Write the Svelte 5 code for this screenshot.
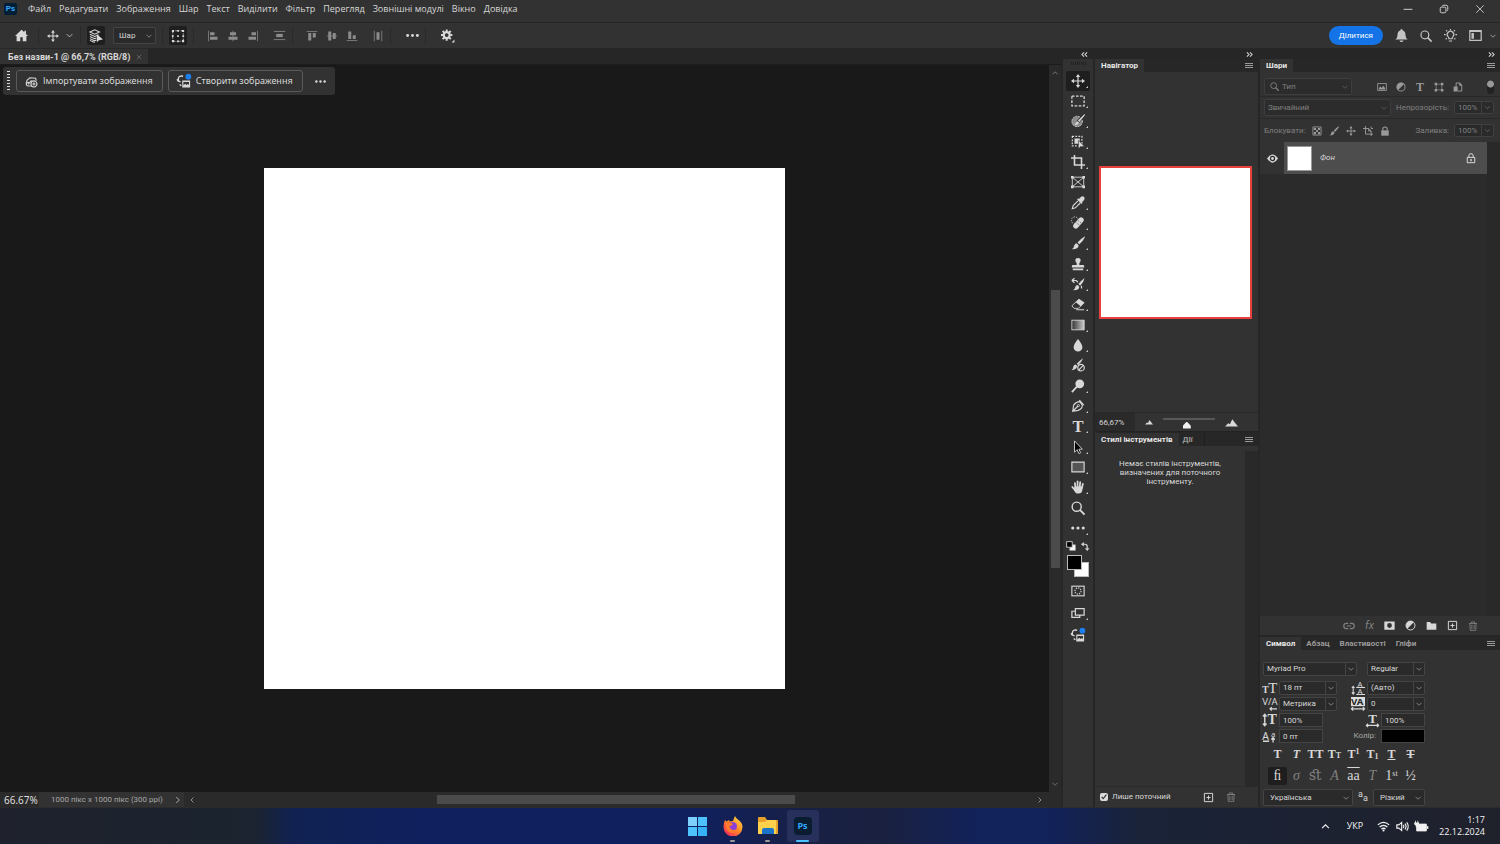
<script lang="ts">
  const menus = ['Файл', 'Редагувати', 'Зображення', 'Шар', 'Текст', 'Виділити', 'Фільтр', 'Перегляд', 'Зовнішні модулі', 'Вікно', 'Довідка']

  const serif = 'font-family="Liberation Serif, serif" fill="currentColor" stroke="none"'
  const sans = 'font-family="Noto Sans, sans-serif" fill="currentColor" stroke="none"'

  // all icons are drawn on a 16x16 grid
  const icons: Record<string, string> = {
    home: '<path fill="currentColor" stroke="none" d="M8 1 0 8.500h2V15h4.500v-5h3v5H14V8.500h2L13.500 6V2h-2v2z"/>',
    move: '<path d="M8 2v12M2 8h12" stroke-width="1.400"/><path fill="currentColor" stroke="none" d="M8 0l2.500 3.500h-5zM8 16l2.500-3.500h-5zM0 8l3.500-2.500v5zM16 8l-3.500-2.500v5z"/>',
    down: '<path stroke-width="1.400" d="M3 5.500 8 10.500 13 5.500"/>',
    up: '<path stroke-width="1.600" d="M3 10.500 8 5.500l5 5"/>',
    left: '<path stroke-width="1.600" d="M11 3 6 8l5 5"/>',
    right: '<path stroke-width="1.600" d="M5 3l5 5-5 5"/>',
    dleft: '<path stroke-width="2.400" d="M7 3 2 8l5 5M14 3 9 8l5 5"/>',
    dright: '<path stroke-width="2.400" d="M2 3l5 5-5 5M9 3l5 5-5 5"/>',
    close: '<path stroke-width="1.300" d="M2 2l12 12M14 2 2 14"/>',
    minimize: '<path stroke-width="1.500" d="M1 8.500h14"/>',
    restore: '<rect x="2" y="5" width="9" height="9" rx="2" stroke-width="1.500"/><path stroke-width="1.500" d="M5 3.500Q5.500 2 7 2h4.500Q14 2 14 4.500V9q0 1.500-1.500 2"/>',
    autoSelect: '<path stroke-width="1.200" d="M1 3.500 6.500 1 12 3.500 6.500 6zM1 6l5.500 2.500L11 6.500M1 8.500 6.500 11l2-1M1 11l5.500 2.500 2-1M1 13l5.500 2.500"/><path fill="currentColor" stroke="none" d="M9 6v9l2.300-2.200L16 12z"/>',
    transform: '<path stroke-dasharray="1.500 1.500" d="M2 2h12v12H2z"/><path fill="currentColor" stroke="none" d="M1 1h2.500v2.500H1zM7 1h2v2H7zM12.500 1H15v2.500h-2.500zM1 7h2v2H1zM13 7h2v2h-2zM1 12.500h2.500V15H1zM7 13h2v2H7zM12.500 12.500H15V15h-2.500zM7 7h2v2H7z"/>',
    alignLeft: '<path d="M2 1v14"/><path fill="currentColor" stroke="none" d="M4 3h6v4H4zM4 9h10v4H4z"/>',
    alignCenter: '<path d="M8 1v14"/><path fill="currentColor" stroke="none" d="M4 3h8v4H4zM2 9h12v4H2z"/>',
    alignRight: '<path d="M14 1v14"/><path fill="currentColor" stroke="none" d="M6 3h6v4H6zM2 9h10v4H2z"/>',
    distribute: '<path d="M1 3h14M1 13h14"/><path fill="currentColor" stroke="none" d="M4 6h8v4H4z"/>',
    alignTop: '<path d="M1 2h14"/><path fill="currentColor" stroke="none" d="M3 4h4v10H3zM9 4h4v6H9z"/>',
    alignMiddle: '<path d="M1 8h14"/><path fill="currentColor" stroke="none" d="M3 2h4v12H3zM9 4h4v8H9z"/>',
    alignBottom: '<path d="M1 14h14"/><path fill="currentColor" stroke="none" d="M3 2h4v10H3zM9 7h4v5H9z"/>',
    distributeH: '<path d="M3 1v14M13 1v14"/><path fill="currentColor" stroke="none" d="M6 3h4v10H6z"/>',
    dots: '<g fill="currentColor" stroke="none"><circle cx="2" cy="8" r="1.800"/><circle cx="8" cy="8" r="1.800"/><circle cx="14" cy="8" r="1.800"/></g>',
    gear: '<circle cx="7" cy="7.500" r="3.700" stroke-width="2.800"/><path stroke-width="2.400" d="M7 .500v2.500M7 12v2.500M0 7.500h2.500M11.500 7.500H14M2 2.500l2 2M10 10.500l2 2M12 2.500l-2 2M4 10.500l-2 2"/><path fill="currentColor" stroke="none" d="M16.500 13v3.500H13z"/>',
    bell: '<path fill="currentColor" stroke="none" d="M8 0q1.200 0 1.300 1.400Q13 2.500 13 8q0 3 2.500 5H.500Q3 11 3 8q0-5.500 3.700-6.600Q6.800 0 8 0zM5.500 14h5q-.5 2-2.500 2t-2.500-2z"/>',
    search: '<circle cx="6.500" cy="6.500" r="5.200" stroke-width="1.600"/><path stroke-width="2.200" d="M10.200 10.200 15.500 15.500"/>',
    bulb: '<path stroke-width="1.400" d="M6 12q0-1.500-1-2.500a4 4 0 1 1 6 0Q10 10.500 10 12zM6 14.800h4M8 0v1.500M0 7h2M14 7h2M2.500 1.500 4 3M13.500 1.500 12 3M2 12.500l1.500-1M14 12.500l-1.500-1"/>',
    workspace: '<rect x="1" y="2" width="14" height="12" stroke-width="1.500"/><path fill="currentColor" stroke="none" d="M3 5h3v7H3zM1 2h14v1.800H1z"/>',
    importImg: '<path stroke-width="1.300" d="M1.500 10.500 2.500 6.500 6 3.500l7 .5 1 3M1.500 10.500q0 3 2.500 3h3M4 11.500l4-5M2 10l3-1"/><circle cx="11" cy="11" r="3.700" stroke-width="1.400"/><path stroke-width="1.300" d="M11 9v4M9 11h4"/>',
    generate: '<path stroke-width="1.600" d="M7 2.500Q1.500 1.500 1.500 6v2l2.500 1M1.500 8.500 0 6M3 12l2 1.500"/><path fill="currentColor" stroke="none" fill-rule="evenodd" d="M6 7.500h9V15.500H6zM7.300 9v4l2-2 1.700 1.500 1.500-1 1.200 1V9z"/><circle cx="13" cy="3" r="3.300" fill="#1b7ff0" stroke="none"/>',
    marquee: '<path stroke-width="1.500" stroke-dasharray="3 1.700" d="M1 2.500h14v11H1z"/>',
    selectBrush: '<circle cx="7" cy="8.500" r="6" stroke-dasharray="2 1.200" fill="#8a8a8a"/><path stroke="#323232" stroke-width="3.500" d="M15 1 8 9"/><path fill="currentColor" stroke="none" d="M15.500 0 16 1 9.500 9 8 7.500zM8 8.500 9 10q-1 3-5 2.500Q5.500 9 8 8.500z"/>',
    objectSelect: '<path stroke-dasharray="2 1.500" stroke-width="1.400" d="M1.500 1.500h11v11h-11z"/><path fill="currentColor" stroke="none" d="M4 4h6v6H4z"/><path fill="currentColor" stroke="#323232" stroke-width=".7" d="M8.500 6v10l2.500-2.800 4.500-.2z"/>',
    crop: '<path stroke-width="1.800" d="M4 0v11.500h12M0 3.500h12V16"/>',
    frame: '<path d="M1.500 2.500h13v11h-13zM2 3l12 10M14 3 2 13"/><path fill="currentColor" stroke="none" d="M0 1h3v3H0zM13 1h3v3h-3zM0 12h3v3H0zM13 12h3v3h-3z"/>',
    dropper: '<path fill="currentColor" stroke="none" d="M11 1.500q2-2 4-.5 1.500 2-.5 4L12.500 7l.8.8-1.300 1.200-5-5L8.200 2.700l.8.8z"/><path stroke-width="1.300" d="M8 5.500 2.500 11 1.500 14.500 5 13.500 10.500 8"/>',
    heal: '<circle cx="4.500" cy="5" r="4" stroke-dasharray="1.500 1.300"/><path stroke-width="6" stroke-linecap="round" d="M5.500 11.500l6-7"/><path stroke="#323232" stroke-width="1" stroke-dasharray="1 1.500" d="M6.500 8l4 3M8.500 5.500l3.500 3"/>',
    brush: '<path fill="currentColor" stroke="none" d="M15.500.5 16 1q-2 4.500-6.500 8.500L7.500 7.500Q11 3 15.500.500zM6.500 8.300l2.200 2.200Q9 15 1 15q2.500-1.500 2.500-4 1-2.500 3-2.700z"/>',
    stamp: '<path fill="currentColor" stroke="none" d="M8 1q3 0 3 2.700Q11 5.500 9.500 7v2H14q1 0 1 1.500V12H1v-1.500Q1 9 2 9h4.500V7Q5 5.500 5 3.700 5 1 8 1zM2 13h12v2H2z"/>',
    history: '<path fill="currentColor" stroke="none" d="M15.500 1q-1 5-5 9L8.500 8Q12 3.500 15.500 1zM7.500 9l2 2q0 4-7 4Q5 13 5 11q.5-2 2.500-2z"/><path stroke-width="1.400" d="M1 4h5l2 2M1 4l3-2.500M1 4l3 2.500M12 10v3"/>',
    eraser: '<path d="M1 10 9 2.500l6 4L8.500 13h-5z"/><path fill="currentColor" stroke="none" d="M5.500 6 9 2.500l6 4-4 4zM6 14h9v1.200H6z"/>',
    gradient: '<defs><linearGradient id="tool-gradient"><stop stop-color="#333"/><stop offset="1" stop-color="#ccc"/></linearGradient></defs><rect x="1" y="2.500" width="14" height="11" fill="url(#tool-gradient)"/>',
    drop: '<path fill="currentColor" stroke="none" d="M8 1q5 6 5 9.500a5 5 0 0 1-10 0Q3 7 8 1z"/>',
    mixer: '<path fill="currentColor" stroke="none" d="M14 0q-2 5-6 8L6.500 6.500Q10 3 14 0zM5.500 7.500 7 9q0 4-6.500 5Q3 12 2.500 10q1-2.500 3-2.500z"/><circle cx="11.500" cy="11" r="3.700" stroke-width="1.400"/><path stroke-width="1.400" d="M9 13.500l5-5"/>',
    dodge: '<circle cx="10" cy="5.500" r="5" fill="currentColor" stroke="none"/><path stroke-width="2" d="M7 8.500 1 15"/>',
    pen: '<path stroke-width="1.300" d="M2 14l1-7q3-4 7-4l3 4q0 4-5 6zM2 14l6-6"/><path stroke-width="1.600" d="M9.500 1.500 14.500 7"/><circle cx="8.500" cy="7.500" r="1.200"/>',
    type: `<text x="8" y="14.500" font-size="19" text-anchor="middle" font-weight="bold" ${serif}>T</text>`,
    pathSelect: '<path fill="#050505" d="M4 1v13l3-3 2 4.500 2-1L9 10.500h4z"/>',
    rect: '<path fill="#555" stroke-width="1.300" d="M1 2.500h14v11H1z"/>',
    hand: '<g stroke-width="2" stroke-linecap="round"><path d="M5 9 4.500 3.500M7.500 8V1.500M10 8l.5-5.500M12.500 9l1-4.500M4.500 11.500 1.500 8"/></g><path fill="currentColor" stroke="none" d="M4 7.500h9.500l-.5 4q-.5 4-4.500 4t-5-4.500z"/>',
    quickMask: '<rect x="1" y="2.500" width="14" height="11" stroke-width="1.300"/><circle cx="8" cy="8" r="3.500" stroke-dasharray="1.500 1.200" stroke-width="1.300"/>',
    screenMode: '<path d="M5 6H1v7h9v-2M5 3h10v7.500H5z" stroke-width="1.400"/>',
    swap: '<path stroke-width="2.200" d="M4 4h3q4 0 4 4v3"/><path fill="currentColor" stroke="none" d="M0 4l5-4v8zM11 16l-4-5h8z"/>',
    defaults: '<path fill="#fff" stroke="#aaa" d="M6 6h9v9H6z"/><path fill="#000" stroke="#ccc" stroke-width="1.500" d="M1 1h9v9H1z"/>',
    image: '<path d="M1 2.500h14v11H1z" stroke-width="1.400"/><path fill="currentColor" stroke="none" d="M3 12V9.500L5.500 7l2 2.500L10 6l3 4v2z"/>',
    halfCircle: '<circle cx="8" cy="8" r="6.500" stroke-width="1.400"/><path fill="currentColor" stroke="none" d="M12.600 3.400A6.500 6.500 0 1 0 3.400 12.600z"/>',
    shape: '<path d="M3.500 3.500h9v9h-9z"/><path fill="currentColor" stroke="none" d="M1 1h4v4H1zM11 1h4v4h-4zM1 11h4v4H1zM11 11h4v4h-4z"/>',
    smart: '<path stroke-width="1.500" d="M5 7V1.500h6L14 5v9.500H8"/><path fill="currentColor" stroke="none" d="M1 7h6.500v8H1zM10 1v5h5z"/>',
    checker: '<path stroke-width="1.400" d="M1.500 1.500h13v13h-13z"/><path fill="currentColor" stroke="none" d="M3 3h3.500v3.500H3zM9.500 3H13v3.500H9.500zM6.500 6.500h3v3h-3zM3 9.500h3.500V13H3zM9.500 9.500H13V13H9.500z"/>',
    artboard: '<path stroke-width="1.500" d="M4 0v13h12M0 4h9l4 4v8M9 4v4h4M13 1v3h3"/>',
    lock: '<path stroke-width="1.700" d="M4.500 8V5a3.500 3.500 0 0 1 7 0v3"/><path fill="currentColor" stroke="none" d="M2 7h12v8.500H2z"/>',
    lockOutline: '<path stroke-width="1.600" d="M4.500 7V4.500a3.500 3.500 0 0 1 7 0V7M2 7h12v8.500H2z"/><path stroke-width="2.200" d="M8 9.500v3.500"/>',
    eye: '<path fill="currentColor" stroke="none" d="M0 8q8-12 16 0-8 12-16 0z"/><circle cx="8" cy="8" r="3" fill="currentColor" stroke="#2b2b2b" stroke-width="1.800"/>',
    link: '<path stroke-width="1.500" d="M7 11.500H4.500a3.500 3.500 0 0 1 0-7H7M9 4.500h2.500a3.500 3.500 0 0 1 0 7H9M5 8h6"/>',
    mask: '<path fill="currentColor" stroke="none" fill-rule="evenodd" d="M.5 2h15v12H.500zM8 4.500a3.500 3.500 0 1 0 0 7 3.500 3.500 0 0 0 0-7z"/>',
    folder: '<path fill="currentColor" stroke="none" d="M1 3h5l1.500 2H15v9H1z"/>',
    plus: '<path stroke-width="1.400" d="M2 2h12v12H2zM8 5v6M5 8h6"/>',
    trash: '<path stroke-width="1.400" d="M1.500 4h13M5.500 4V1.500h5V4M3 4l.7 11h8.600L13 4M6.200 6v7M9.800 6v7"/>',
    hill: '<path fill="currentColor" stroke="none" d="M0 13l4-4 2 1 3-6 3 4 4 5z"/>',
    wifi: '<path stroke-width="1.600" d="M1 6q7-6 14 0M3.200 8.700q4.800-4.200 9.600 0M5.500 11.200q2.500-2 5 0"/><circle cx="8" cy="13" r="1.300" fill="currentColor" stroke="none"/>',
    sound: '<path stroke-width="1.400" d="M1 6h2.500L7 3v10l-3.500-3H1zM9 6q1.500 2 0 4M11 4.500q2.800 3.500 0 7M13.200 3q3.800 5 0 10"/>',
    battery: '<path fill="currentColor" d="M4 5h10v8.500H2V8z"/><path stroke-width="1.800" d="M15.500 7.500v3.500"/><path fill="currentColor" stroke="none" d="M0 1h1v2h2V1h1v2h1v2q-1 2-2 2v2H1V7Q-1 6-1 5V3h1z"/>',
    sizeT: `<text x="-1" y="14" font-size="11" font-weight="bold" ${serif}>T</text><text x="6" y="14" font-size="17" ${serif}>T</text>`,
    leading: `<path stroke-width="1.200" d="M2.500 6v9M1 8l1.500-2L4 8M1 13l1.500 2L4 13M6 7.500h10M6 15.500h10"/><text x="7.500" y="6.500" font-size="9" ${sans}>A</text><text x="7.500" y="14.500" font-size="9" ${sans}>A</text>`,
    kerning: `<text x="-1" y="9.500" font-size="11" ${sans}>V/A</text><path stroke-width="1.400" d="M8 13.500h8M10 11.500l-2 2 2 2"/>`,
    tracking: `<path fill="#ddd" stroke="none" d="M0 0h16v10.500H0z"/><text x="0" y="9.500" font-size="11" font-family="Noto Sans, sans-serif" font-weight="bold" fill="#262626" stroke="none">VA</text><path stroke-width="1.400" d="M0 13.500h16M2.500 11.500l-2 2 2 2M13.500 11.500l2 2-2 2"/>`,
    vscale: `<path stroke-width="1.600" d="M2 2v12M0 4l2-2.500L4 4M0 12l2 2.500L4 12"/><text x="5" y="13" font-size="16" font-weight="bold" ${serif}>T</text>`,
    hscale: `<text x="8" y="11" font-size="16" text-anchor="middle" font-weight="bold" ${serif}>T</text><path stroke-width="1.500" d="M0 14h16M2.500 12l-2 2 2 2M13.500 12l2 2-2 2"/>`,
    baseline: `<text x="-1" y="12" font-size="12" ${sans}>A</text><text x="9" y="9" font-size="9" ${sans}>a</text><path stroke-width="1.500" d="M0 14h7M11.500 10v5.500M9.500 12l2-2 2 2"/>`
  }

  const tools = [
    ['move', 'Переміщення'], ['marquee', 'Прямокутна область'], ['selectBrush', 'Пензель виділення'],
    ['objectSelect', 'Виділення обʼєктів'], ['crop', 'Кадрування'], ['frame', 'Рамка'], ['dropper', 'Піпетка'],
    ['heal', 'Відновлення'], ['brush', 'Пензель'], ['stamp', 'Штамп'], ['history', 'Архівний пензель'],
    ['eraser', 'Гумка'], ['gradient', 'Градієнт'], ['drop', 'Розмиття'], ['mixer', 'Коригувальний пензель'],
    ['dodge', 'Освітлення'], ['pen', 'Перо'], ['type', 'Текст'], ['pathSelect', 'Виділення контуру'],
    ['rect', 'Прямокутник'], ['hand', 'Рука'], ['search', 'Масштаб'], ['dots', 'Інше']
  ]
  const noFlyout = ['frame', 'mixer', 'search']

  let activeTool = 'move'
  let onlyCurrent = true
</script>

{#snippet icon(name: string, size = 12)}
  <svg class="icon" width={size} height={size} viewBox="0 0 16 16" aria-hidden="true">{@html icons[name]}</svg>
{/snippet}

{#snippet combo(label: string, value: string, kind = '')}
  <span class="combo {kind}">
    <select aria-label={label}><option>{value}</option></select>
    <span class="arrow">{@render icon('down', 8)}</span>
  </span>
{/snippet}

{#snippet burger()}
  <button class="burger" aria-label="Меню панелі"><i></i><i></i><i></i></button>
{/snippet}

<div class="screen">
  <header class="menubar">
    <span class="ps-logo">Ps</span>
    <nav>
      {#each menus as item}
        <button>{item}</button>
      {/each}
    </nav>
    <div class="window-buttons">
      <button aria-label="Згорнути">{@render icon('minimize', 10)}</button>
      <button aria-label="Відновити">{@render icon('restore', 10)}</button>
      <button aria-label="Закрити">{@render icon('close', 10)}</button>
    </div>
  </header>

  <div class="options">
    <button class="home" aria-label="Головна">{@render icon('home', 13)}</button>
    <span class="sep"></span>
    <button class="opt-move" aria-label="Переміщення">{@render icon('move', 12)}{@render icon('down', 9)}</button>
    <span class="sep"></span>
    <button class="pressed" aria-label="Автовибір">{@render icon('autoSelect', 14)}</button>
    {@render combo('Автовибір', 'Шар', 'layer-kind')}
    <span class="sep"></span>
    <button class="pressed" aria-label="Елементи трансформування">{@render icon('transform', 14)}</button>
    <span class="sep"></span>
    <div class="aligns">
      <button aria-label="За лівим краєм">{@render icon('alignLeft', 12)}</button>
      <button aria-label="По центру">{@render icon('alignCenter', 12)}</button>
      <button aria-label="За правим краєм">{@render icon('alignRight', 12)}</button>
    </div>
    <div class="aligns last"><button aria-label="Розподілити">{@render icon('distribute', 13)}</button></div>
    <span class="sep"></span>
    <div class="aligns">
      <button aria-label="За верхнім краєм">{@render icon('alignTop', 12)}</button>
      <button aria-label="Посередині">{@render icon('alignMiddle', 12)}</button>
      <button aria-label="За нижнім краєм">{@render icon('alignBottom', 12)}</button>
    </div>
    <div class="aligns last"><button aria-label="Розподілити горизонтально">{@render icon('distributeH', 12)}</button></div>
    <span class="sep"></span>
    <button class="spaced" aria-label="Ще">{@render icon('dots', 13)}</button>
    <span class="sep"></span>
    <button class="spaced" aria-label="Налаштування">{@render icon('gear', 13)}</button>

    <div class="options-right">
      <button class="share">Ділитися</button>
      <button aria-label="Сповіщення">{@render icon('bell', 13)}</button>
      <button aria-label="Пошук">{@render icon('search', 12)}</button>
      <button aria-label="Довідка">{@render icon('bulb', 13)}</button>
      <button class="ws" aria-label="Робоче середовище">{@render icon('workspace', 13)}{@render icon('down', 8)}</button>
    </div>
  </div>

  <div class="workspace">
    <main class="document">
      <div class="doc-tabs">
        <div class="doc-tab">
          <span>Без назви-1 @ 66,7% (RGB/8)</span>
          <button aria-label="Закрити документ">{@render icon('close', 6)}</button>
        </div>
      </div>
      <div class="doc-body">
        <div class="viewport">
          <div class="artboard"></div>
          <div class="context-bar">
            <span class="grip"></span>
            <button class="action">{@render icon('importImg', 13)}Імпортувати зображення</button>
            <button class="action">{@render icon('generate', 14)}Створити зображення</button>
            <button class="more" aria-label="Ще">{@render icon('dots', 11)}</button>
          </div>
        </div>
        <div class="vscroll">
          {@render icon('up', 8)}
          <div class="track"><div class="thumb"></div></div>
          {@render icon('down', 8)}
        </div>
      </div>
      <div class="status">
        <span class="zoom">66.67%</span>
        <span class="info">1000 пікс x 1000 пікс (300 ppi)</span>
        <button aria-label="Відомості">{@render icon('right', 10)}</button>
        {@render icon('left', 8)}
        <div class="hscroll"><div class="thumb"></div></div>
        {@render icon('right', 8)}
        <span class="corner"></span>
      </div>
    </main>

    <aside class="toolbar">
      <div class="collapse">{@render icon('dleft', 7)}</div>
      <div class="tools">
        <span class="tool-grip"></span>
        <div class="tool-list">
          {#each tools as [name, label]}
            <button
              class="tool"
              class:active={activeTool === name}
              class:flyout={!noFlyout.includes(name)}
              aria-label={label}
              on:click={() => (activeTool = name)}
            >
              {@render icon(name, 14)}
            </button>
          {/each}
        </div>
        <div class="color-reset">
          <button aria-label="Стандартні кольори">{@render icon('defaults', 10)}</button>
          <button aria-label="Поміняти кольори">{@render icon('swap', 9)}</button>
        </div>
        <div class="swatches">
          <button class="bg" aria-label="Колір тла"></button>
          <button class="fg" aria-label="Основний колір"></button>
        </div>
        <div class="modes">
          <button class="tool" aria-label="Швидка маска">{@render icon('quickMask', 14)}</button>
          <button class="tool flyout" aria-label="Режим екрана">{@render icon('screenMode', 14)}</button>
          <button class="tool" aria-label="Створити зображення">{@render icon('generate', 14)}</button>
        </div>
      </div>
    </aside>

    <aside class="column narrow">
      <div class="collapse">{@render icon('dright', 7)}</div>
      <section class="panel navigator">
        <div class="tabs">
          <button class="tab current">Навігатор</button>
          {@render burger()}
        </div>
        <div class="nav-view"><div class="nav-preview"></div></div>
        <div class="nav-zoom">
          <input class="zoom-value" type="text" value="66,67%" aria-label="Масштаб" />
          {@render icon('hill', 8)}
          <input class="zoom-range" type="range" value="45" aria-label="Повзунок масштабу" />
          {@render icon('hill', 13)}
        </div>
      </section>
      <section class="panel presets">
        <div class="tabs">
          <button class="tab current">Стилі інструментів</button>
          <button class="tab bordered">Дії</button>
          {@render burger()}
        </div>
        <div class="preset-body">
          <p>Немає стилів інструментів, визначених для поточного інструменту.</p>
          <span class="gutter"></span>
        </div>
        <div class="preset-foot">
          <label><input type="checkbox" bind:checked={onlyCurrent} />Лише поточний</label>
          <button aria-label="Новий стиль">{@render icon('plus', 11)}</button>
          <button class="dim" aria-label="Видалити">{@render icon('trash', 10)}</button>
        </div>
      </section>
    </aside>

    <aside class="column wide">
      <div class="collapse">{@render icon('dright', 7)}</div>
      <section class="panel layers">
        <div class="tabs">
          <button class="tab current">Шари</button>
          {@render burger()}
        </div>
        <div class="row filter">
          <span class="kind">
            {@render icon('search', 9)}
            {@render combo('Тип фільтра', 'Тип')}
          </span>
          <div class="filters">
            {#each ['image', 'halfCircle', 'type', 'shape', 'smart'] as f}
              <button aria-label="Фільтр">{@render icon(f, 10)}</button>
            {/each}
          </div>
          <span class="toggle"></span>
        </div>
        <div class="row blend">
          {@render combo('Режим накладання', 'Звичайний', 'grow')}
          <label for="opacity">Непрозорість:</label>
          <span class="percent"><input id="opacity" value="100%" />{@render icon('down', 7)}</span>
        </div>
        <div class="row locks">
          <span>Блокувати:</span>
          <div class="lock-icons">
            {#each ['checker', 'brush', 'move', 'artboard', 'lock'] as l}
              <button aria-label="Блокувати">{@render icon(l, 10)}</button>
            {/each}
          </div>
          <label for="fill">Заливка:</label>
          <span class="percent"><input id="fill" value="100%" />{@render icon('down', 7)}</span>
        </div>
        <div class="layer-list">
          <div class="layer">
            <button class="visibility" aria-label="Видимість">{@render icon('eye', 11)}</button>
            <div class="layer-main">
              <span class="thumb"></span>
              <span class="name">Фон</span>
              {@render icon('lockOutline', 10)}
            </div>
          </div>
          <span class="gutter"></span>
        </div>
        <div class="layer-foot">
          <button class="dim" aria-label="Звʼязати">{@render icon('link', 12)}</button>
          <button class="dim fx" aria-label="Стиль шару">fx</button>
          <button aria-label="Маска">{@render icon('mask', 11)}</button>
          <button aria-label="Коригування">{@render icon('halfCircle', 11)}</button>
          <button aria-label="Група">{@render icon('folder', 11)}</button>
          <button aria-label="Новий шар">{@render icon('plus', 11)}</button>
          <button class="dim" aria-label="Видалити шар">{@render icon('trash', 10)}</button>
        </div>
      </section>

      <section class="panel character">
        <div class="tabs">
          <button class="tab current">Символ</button>
          <button class="tab">Абзац</button>
          <button class="tab">Властивості</button>
          <button class="tab">Гліфи</button>
          {@render burger()}
        </div>
        <div class="char-body">
          <div class="char-row font">
            {@render combo('Шрифт', 'Myriad Pro', 'split family')}
            {@render combo('Накреслення', 'Regular', 'split')}
          </div>
          <div class="char-row">
            <span class="field">{@render icon('sizeT', 14)}{@render combo('Кегль', '18 пт', 'split')}</span>
            <span class="field">{@render icon('leading', 14)}{@render combo('Інтерліньяж', '(Авто)', 'split')}</span>
          </div>
          <div class="char-row">
            <span class="field">{@render icon('kerning', 14)}{@render combo('Кернінг', 'Метрика', 'split')}</span>
            <span class="field">{@render icon('tracking', 14)}{@render combo('Трекінг', '0', 'split')}</span>
          </div>
          <div class="char-row">
            <span class="field">{@render icon('vscale', 14)}<input value="100%" aria-label="Масштаб по вертикалі" /></span>
            <span class="field">{@render icon('hscale', 13)}<input value="100%" aria-label="Масштаб по горизонталі" /></span>
          </div>
          <div class="char-row">
            <span class="field">{@render icon('baseline', 14)}<input value="0 пт" aria-label="Зсув базової лінії" /></span>
            <span class="field color"><span>Колір:</span><button class="color-box" aria-label="Колір"></button></span>
          </div>
          <div class="glyphs styles">
            <button><b>T</b></button>
            <button><i>T</i></button>
            <button>TT</button>
            <button>T<small>T</small></button>
            <button>T<sup>1</sup></button>
            <button>T<sub>1</sub></button>
            <button><u>T</u></button>
            <button><s>T</s></button>
          </div>
          <div class="glyphs opentype">
            <button class="on">ﬁ</button>
            <button class="dim"><i>σ</i></button>
            <button class="dim">ﬆ</button>
            <button class="dim"><i>A</i></button>
            <button class="over">aa</button>
            <button class="dim"><i>T</i></button>
            <button>1<sup>st</sup></button>
            <button>½</button>
          </div>
          <div class="char-row lang">
            {@render combo('Мова', 'Українська', 'family')}
            <span class="aa"><sup>a</sup>a</span>
            {@render combo('Згладжування', 'Різкий', 'smooth')}
          </div>
        </div>
      </section>
    </aside>
  </div>

  <footer class="taskbar">
    <span></span>
    <div class="apps">
      <button aria-label="Пуск">
        <svg width="19" height="19" viewBox="0 0 20 20">
          <path fill="#7cd0fb" d="M0 0h9.500v9.500H0z" />
          <path fill="#4cc2ff" d="M10.500 0H20v9.500h-9.500zM0 10.500h9.500V20H0z" />
          <path fill="#35b2f7" d="M10.500 10.500H20V20h-9.500z" />
        </svg>
      </button>
      <button class="running" aria-label="Firefox">
        <svg width="20" height="20" viewBox="0 0 20 20">
          <defs>
            <linearGradient id="fox" x1="1" y1="0" x2=".2" y2="1">
              <stop offset="0" stop-color="#ffe14a" />
              <stop offset=".5" stop-color="#ff9026" />
              <stop offset="1" stop-color="#f5245f" />
            </linearGradient>
          </defs>
          <path fill="url(#fox)" d="M12 0q1 2.500 3.500 4Q19.500 7 19.500 11a9.500 9.500 0 0 1-19 0Q.5 7 2 4l1.500 1.500L6 4l.5 1.500L10 5q1-3 2-5z" />
          <circle cx="9.500" cy="10.500" r="4.500" fill="#8a3fd8" />
          <path fill="#ff7a2c" d="M3 6q4-1 7 2-1 2-3.500 2 .5 4 4.500 4 3 0 4.500-2-1 5-6 5Q3 16 3 10z" />
        </svg>
      </button>
      <button class="running" aria-label="Провідник">
        <svg width="20" height="20" viewBox="0 0 20 20">
          <path fill="#e8a02c" d="M0 2q0-1 1-1h6l2 3h10q1 0 1 1v13H0z" />
          <path fill="#ffd04c" d="M0 6h7l2-2h9v14H0z" />
          <path fill="#1c74c8" d="M4 18v-4q0-2 2-2h8q2 0 2 2v4z" />
        </svg>
      </button>
      <button class="focused" aria-label="Photoshop"><span class="ps-tile">Ps</span></button>
    </div>
    <div class="tray">
      {@render icon('up', 11)}
      <span class="lang-code">УКР</span>
      <span class="tray-icons">
        {@render icon('wifi', 13)}
        {@render icon('sound', 13)}
        {@render icon('battery', 13)}
      </span>
      <span class="clock">1:17<br />22.12.2024</span>
    </div>
  </footer>
</div>

<style>
  :global(body) {
    background: #323232;
  }

  .screen {
    display: flex;
    flex-direction: column;
    min-height: 100vh;
    background: #323232;
    color: #d8d8d8;
    font-family: Roboto, 'Noto Sans', sans-serif;
    font-size: 8px;
    line-height: 10px;
  }

  .screen * {
    box-sizing: border-box;
  }

  button,
  input,
  select {
    margin: 0;
    padding: 0;
    border: none;
    background: none;
    color: inherit;
    font: inherit;
  }

  button {
    display: flex;
    align-items: center;
    justify-content: center;
  }

  .icon {
    display: block;
    flex: none;
    fill: none;
    stroke: currentColor;
    overflow: visible;
  }

  .dim {
    color: #808080;
  }

  /* menu bar */
  .menubar {
    display: flex;
    align-items: center;
    height: 23px;
    padding: 0 15px 4px 4px;
    border-bottom: 1px solid #262626;
  }

  .ps-logo {
    width: 13px;
    border-radius: 2px;
    background: #001e36;
    color: #31a8ff;
    font-size: 8px;
    font-weight: bold;
    line-height: 12px;
    text-align: center;
  }

  nav {
    display: flex;
    flex: 1;
    gap: 8px;
    margin-left: 11px;
    font-family: 'Open Sans', 'Noto Sans', sans-serif;
    font-size: 9px;
  }

  .window-buttons {
    display: flex;
    gap: 26px;
  }

  /* options bar */
  .options {
    display: flex;
    align-items: center;
    gap: 6px;
    height: 26px;
    padding: 0 3px 0 11px;
    border-bottom: 1px solid #282828;
  }

  .home {
    width: 21px;
  }

  .sep {
    width: 1px;
    height: 18px;
    background: #2a2a2a;
  }

  .opt-move {
    gap: 6px;
    margin-left: 2px;
  }

  .pressed {
    width: 18px;
    height: 19px;
    border-radius: 2px;
    background: #1e1e1e;
  }

  .aligns {
    display: flex;
    gap: 8px;
    padding: 0 4px;
    color: #8c8c8c;
  }

  .sep + .aligns {
    padding-left: 7px;
  }

  .aligns.last {
    padding-right: 0;
  }

  .spaced {
    margin-left: 9px;
  }

  .options-right {
    display: flex;
    align-items: center;
    gap: 12px;
    margin-left: auto;
    color: #c4c4c4;
  }

  .share {
    height: 19px;
    padding: 0 10px;
    border-radius: 10px;
    background: #1473e6;
    color: #fff;
  }

  .ws {
    gap: 7px;
  }

  /* selects */
  .combo {
    display: inline-grid;
    align-items: center;
    height: 17px;
    border: 1px solid #444;
    border-radius: 2px;
    background: #2a2a2a;
  }

  .combo select {
    grid-area: 1 / 1;
    width: 100%;
    height: 100%;
    padding: 0 12px 0 3px;
    appearance: none;
  }

  .arrow {
    display: flex;
    grid-area: 1 / 1;
    align-items: center;
    justify-content: center;
    justify-self: end;
    width: 12px;
    height: 100%;
    color: #a0a0a0;
    pointer-events: none;
  }

  .layer-kind {
    width: 43px;
    margin-left: 2px;
  }

  .layer-kind select {
    padding-left: 5px;
  }

  .split .arrow {
    width: 11px;
    border-left: 1px solid #444;
  }

  /* document */
  .workspace {
    display: flex;
    flex: 1;
    background: #262626;
  }

  .document {
    display: flex;
    flex: 1;
    flex-direction: column;
    min-width: 0;
  }

  .doc-tabs {
    display: flex;
    height: 16px;
    border-bottom: 1px solid #1c1c1c;
  }

  .doc-tab {
    display: flex;
    align-items: center;
    gap: 6px;
    padding: 0 6px 0 8px;
    background: #323232;
    font-size: 9px;
    font-weight: bold;
  }

  .doc-tab button {
    color: #909090;
  }

  .doc-body {
    display: flex;
    flex: 1;
  }

  .viewport {
    position: relative;
    display: flex;
    flex: 1;
    align-items: center;
    justify-content: center;
    background: #191919;
  }

  .artboard {
    width: 521px;
    aspect-ratio: 1;
    background: #fff;
  }

  .context-bar {
    position: absolute;
    top: 2px;
    left: 3px;
    display: flex;
    align-items: center;
    height: 28px;
    padding: 0 9px 0 4px;
    border-radius: 3px;
    background: #323232;
    gap: 5px;
    font-family: 'Noto Sans', sans-serif;
    font-size: 9px;
  }

  .grip {
    width: 3px;
    height: 21px;
    margin-right: 1px;
    background: repeating-linear-gradient(#ddd 0 1px, transparent 1px 3px);
  }

  .action {
    height: 22px;
    gap: 5px;
    padding: 0 9px 0 8px;
    border: 1px solid #5a5a5a;
    border-radius: 3px;
  }

  .more {
    margin-left: 7px;
  }

  .vscroll {
    display: flex;
    flex-direction: column;
    align-items: center;
    gap: 4px;
    width: 12px;
    padding: 4px 0;
    background: #2a2a2a;
    color: #888;
  }

  .track {
    display: flex;
    flex: 1;
    align-items: center;
  }

  .vscroll .thumb {
    width: 9px;
    height: 40%;
    border-radius: 1px;
    background: #4b4b4b;
  }

  .status {
    display: flex;
    align-items: center;
    height: 15px;
    background: #2a2a2a;
    color: #a8a8a8;
  }

  .zoom {
    width: 39px;
    padding-left: 4px;
    color: #ddd;
    font-family: 'Noto Sans', sans-serif;
    font-size: 10px;
  }

  .info {
    display: flex;
    align-items: center;
    height: 100%;
    padding: 0 10px 0 12px;
    background: #323232;
  }

  .status button {
    height: 100%;
    padding-right: 1px;
    margin-right: 4px;
    background: #323232;
  }

  .hscroll {
    display: flex;
    flex: 1;
    justify-content: center;
    padding: 0 4px;
  }

  .hscroll .thumb {
    width: 43%;
    height: 9px;
    background: #4b4b4b;
  }

  .corner {
    width: 17px;
  }

  /* toolbar */
  .toolbar {
    display: flex;
    flex-direction: column;
    width: 30px;
    margin: 0 2px;
  }

  .collapse {
    display: flex;
    align-items: center;
    justify-content: flex-end;
    height: 10px;
    padding-right: 5px;
  }

  .tools {
    display: flex;
    flex: 1;
    flex-direction: column;
    align-items: center;
    background: #323232;
  }

  .tool-grip {
    width: 15px;
    height: 3px;
    margin: 3px 0 6px;
    background: repeating-linear-gradient(90deg, #222 0 1px, transparent 1px 2px);
  }

  .tool {
    position: relative;
    width: 24px;
    height: 20px;
    border-radius: 2px;
  }

  .tool-list .tool:nth-child(3n) {
    margin-bottom: 1px;
  }

  .tool.active {
    background: #1e1e1e;
  }

  .flyout::after {
    content: '';
    position: absolute;
    right: 2px;
    bottom: 3px;
    border: 1px solid transparent;
    border-right-color: #ccc;
    border-bottom-color: #ccc;
  }

  .color-reset {
    display: flex;
    justify-content: space-between;
    width: 24px;
    margin-top: 3px;
  }

  .swatches {
    position: relative;
    width: 22px;
    height: 22px;
    margin: 4px 0;
  }

  .fg,
  .bg {
    position: absolute;
    width: 15px;
    height: 15px;
    border: 1px solid #bbb;
  }

  .fg {
    top: 0;
    left: 0;
    background: #000;
  }

  .bg {
    right: 0;
    bottom: 0;
    background: #fff;
  }

  .modes {
    display: flex;
    flex-direction: column;
    gap: 2px;
  }

  /* panels */
  .column {
    display: flex;
    flex-direction: column;
  }

  .narrow {
    width: 163px;
    margin-right: 2px;
  }

  .wide {
    width: 240px;
  }

  .panel {
    display: flex;
    flex-direction: column;
    background: #323232;
  }

  .tabs {
    display: flex;
    align-items: center;
    height: 13px;
    background: #272727;
  }

  .tab {
    height: 100%;
    padding: 0 5px;
    color: #9a9a9a;
    font-weight: bold;
  }

  .tab.current {
    padding: 0 6px;
    background: #323232;
    color: #e8e8e8;
  }

  .tab.bordered {
    padding: 0 11px 0 4px;
    border-right: 1px solid #1f1f1f;
  }

  .burger {
    flex-direction: column;
    gap: 1px;
    margin-left: auto;
    margin-right: 5px;
  }

  .burger i {
    width: 8px;
    height: 1px;
    background: #999;
  }

  .nav-view {
    display: flex;
    align-items: center;
    justify-content: center;
    height: 340px;
    padding: 0 6px 0 4px;
  }

  .nav-preview {
    width: 100%;
    aspect-ratio: 1;
    border: 2px solid #e8403c;
    background: #fff;
  }

  .nav-zoom {
    display: flex;
    align-items: center;
    gap: 10px;
    height: 20px;
    padding-right: 20px;
    border-top: 1px solid #282828;
    border-bottom: 1px solid #222;
  }

  .zoom-value {
    width: 40px;
    height: 100%;
    padding-left: 4px;
    background: #2a2a2a;
  }

  .zoom-range {
    flex: 1;
    width: 0;
    height: 14px;
    appearance: none;
    background: linear-gradient(#585858, #585858) center 3px / 100% 2px no-repeat;
  }

  .zoom-range::-webkit-slider-thumb {
    appearance: none;
    width: 8px;
    height: 7px;
    margin-top: 6px;
    background: #f0f0f0;
    clip-path: polygon(50% 0, 100% 60%, 100% 100%, 0 100%, 0 60%);
  }

  .presets {
    flex: 1;
    margin-top: 1px;
  }

  .preset-body {
    display: flex;
    flex: 1;
    padding-top: 5px;
  }

  .preset-body p {
    flex: 1;
    margin: 8px 18px;
    line-height: 9px;
    text-align: center;
  }

  .gutter {
    width: 13px;
    background: #292929;
  }

  .preset-foot {
    display: flex;
    align-items: center;
    gap: 12px;
    height: 21px;
    padding: 0 22px 0 5px;
    border-top: 1px solid #2a2a2a;
  }

  .preset-foot label {
    display: flex;
    flex: 1;
    align-items: center;
    gap: 4px;
  }

  .preset-foot input {
    width: 8px;
    height: 8px;
    accent-color: #ddd;
  }

  /* layers */
  .layers {
    flex: 1;
  }

  .row {
    display: flex;
    align-items: center;
    gap: 5px;
    height: 22px;
    padding: 0 6px 0 4px;
    border-bottom: 1px solid #282828;
    color: #808080;
  }

  .row .combo,
  .kind {
    border: 1px solid #3d3d3d;
    background: #2c2c2c;
  }

  .row .arrow {
    color: #666;
  }

  .filter {
    height: 25px;
    padding-top: 5px;
  }

  .kind {
    display: flex;
    align-items: center;
    width: 88px;
    height: 17px;
    padding-left: 5px;
    border-radius: 2px;
  }

  .kind .combo {
    flex: 1;
    height: 15px;
    border: none;
    background: none;
  }

  .filters {
    display: flex;
    gap: 9px;
    margin-left: 20px;
    color: #9a9a9a;
  }

  .toggle {
    width: 7px;
    height: 14px;
    margin-left: auto;
    border-radius: 4px;
    background: radial-gradient(circle at 50% 4px, #999 3px, #222 4px);
  }

  .grow {
    flex: 1;
  }

  .percent {
    display: flex;
    align-items: center;
    width: 40px;
    height: 13px;
    border: 1px solid #404040;
    border-radius: 2px;
    background: #2a2a2a;
  }

  .percent input {
    flex: 1;
    width: 0;
    height: 100%;
    margin-right: 2px;
    padding-left: 3px;
    border-right: 1px solid #404040;
  }

  .percent .icon {
    margin-right: 2px;
  }

  .locks {
    height: 23px;
    border-bottom: none;
  }

  .lock-icons {
    display: flex;
    flex: 1;
    gap: 7px;
    margin-left: 1px;
    color: #9a9a9a;
  }

  .layer-list {
    display: flex;
    flex: 1;
    background: #2b2b2b;
  }

  .layer {
    display: flex;
    flex: 1;
    height: 32px;
  }

  .visibility {
    width: 24px;
    background: #323232;
  }

  .layer-main {
    display: flex;
    flex: 1;
    align-items: center;
    padding: 0 11px 0 3px;
    background: #4d4d4d;
  }

  .layer-main .thumb {
    width: 25px;
    height: 25px;
    border: 1px solid #999;
    background: #fff;
  }

  .name {
    flex: 1;
    margin-left: 8px;
    font-style: italic;
  }

  .layer-foot {
    display: flex;
    align-items: center;
    justify-content: flex-end;
    gap: 10px;
    height: 19px;
    padding-right: 22px;
  }

  .fx {
    font-size: 11px;
    font-style: italic;
  }

  /* character */
  .character {
    margin-top: 2px;
  }

  .char-body {
    display: flex;
    flex-direction: column;
    gap: 2px;
    width: 165px;
    padding: 12px 0 1px 3px;
  }

  .char-row {
    display: flex;
    align-items: center;
    justify-content: space-between;
    height: 14px;
  }

  .font {
    margin-bottom: 3px;
  }

  .char-row .combo {
    width: 58px;
    height: 14px;
  }

  .char-row .family {
    width: 94px;
  }

  .char-row .smooth {
    width: 52px;
  }

  .field {
    display: flex;
    align-items: center;
    gap: 2px;
  }

  .field input,
  .color-box {
    width: 44px;
    height: 14px;
    padding-left: 3px;
    border: 1px solid #444;
    background: #2a2a2a;
  }

  .color {
    gap: 5px;
    color: #a8a8a8;
  }

  .field .color-box {
    background: #000;
  }

  .glyphs {
    display: flex;
    height: 18px;
    padding-left: 5px;
    font-family: 'Liberation Serif', 'DejaVu Serif', serif;
    font-size: 12px;
  }

  .styles {
    font-weight: bold;
  }

  .opentype {
    margin: 2px 0;
    font-size: 14px;
  }

  .glyphs button {
    width: 19px;
    height: 18px;
  }

  .glyphs sup,
  .glyphs sub,
  .glyphs small {
    font-size: 8px;
    line-height: 8px;
  }

  .glyphs sup {
    margin-bottom: 5px;
  }

  .glyphs sub {
    margin-top: 5px;
  }

  .glyphs small {
    margin-top: 3px;
  }

  .glyphs .on {
    border-radius: 2px;
    background: #1e1e1e;
  }

  .over {
    text-decoration: overline;
  }

  .lang {
    height: 17px;
  }

  .lang .combo {
    height: 17px;
  }

  .lang .combo select {
    padding-left: 6px;
  }

  .lang .family {
    width: 90px;
  }

  .aa {
    font-size: 9px;
  }

  .aa sup {
    font-size: 9px;
    line-height: 0;
  }

  /* taskbar */
  .taskbar {
    display: grid;
    grid-template-columns: 1fr auto 1fr;
    align-items: center;
    height: 37px;
    border-top: 1px solid #2c2c30;
    background: linear-gradient(
      90deg,
      #1f222c 0%,
      #1b2430 17%,
      #112252 19.5%,
      #10205e 28%,
      #10205e 46%,
      #182044 54%,
      #1a2140 59%,
      #12225a 65%,
      #12225a 70%,
      #1a2338 76%,
      #1f212b 100%
    );
    color: #f2f2f2;
    font-family: 'Open Sans', 'Noto Sans', sans-serif;
  }

  .apps {
    display: flex;
    gap: 3px;
  }

  .apps button {
    position: relative;
    width: 32px;
    height: 32px;
    border-radius: 3px;
  }

  .apps .focused {
    background: #26305a;
  }

  .running::after,
  .focused::after {
    content: '';
    position: absolute;
    bottom: 0;
    width: 5px;
    height: 2px;
    border-radius: 1px;
    background: #9a9a9a;
  }

  .focused::after {
    width: 13px;
    background: #4cc2ff;
  }

  .ps-tile {
    width: 18px;
    border-radius: 4px;
    background: #0a1c30;
    color: #31a8ff;
    font-size: 9px;
    font-weight: bold;
    line-height: 18px;
  }

  .tray {
    display: flex;
    align-items: center;
    justify-content: flex-end;
    padding-right: 15px;
    font-size: 9px;
  }

  .lang-code {
    margin: 0 14px 0 16px;
  }

  .tray-icons {
    display: flex;
    gap: 6px;
  }

  .clock {
    margin-left: 11px;
    line-height: 12px;
    text-align: right;
  }
</style>
